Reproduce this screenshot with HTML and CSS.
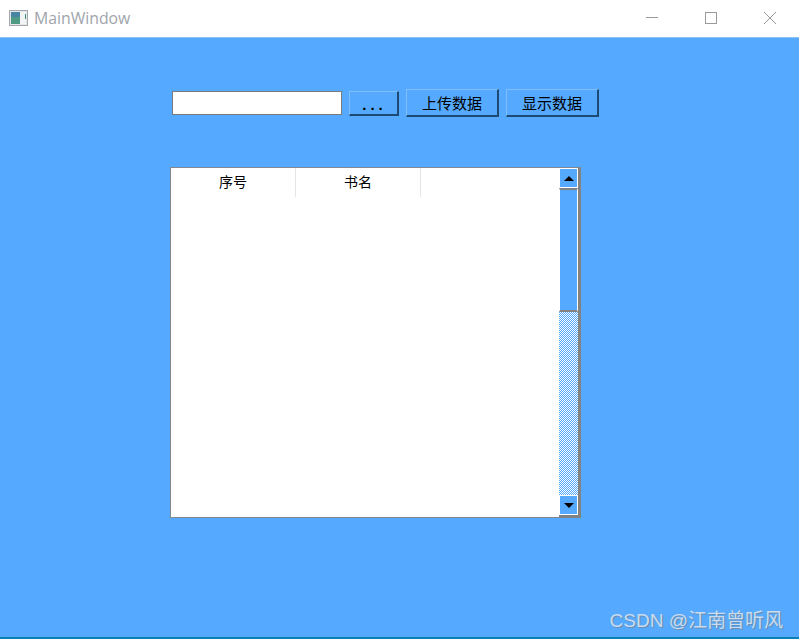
FILE: index.html
```html
<!DOCTYPE html>
<html lang="en">
<head>
    <meta charset="UTF-8">
    <meta name="viewport" content="width=device-width, initial-scale=1.0">
    <title>MainWindow</title>
    <link rel="stylesheet" href="styles.css">
</head>
<body>
    <div class="titlebar">
        <svg class="app-icon" width="19" height="16" viewBox="0 0 19 16">
            <rect x="0.5" y="0.5" width="18" height="15" fill="#e4e6e8" stroke="#a4a8ae"/>
            <rect x="2" y="2" width="9" height="12" fill="#4f9a84"/>
            <rect x="2" y="2" width="9" height="5" fill="#4a84a4"/>
            <rect x="11" y="2" width="6" height="12" fill="#f2f3f3"/>
            <rect x="16" y="4" width="1" height="5" fill="#3f8f7c"/>
        </svg>
        <span class="title">MainWindow</span>
        <div class="window-controls">
            <svg class="ctl" width="12" height="12" viewBox="0 0 12 12"><path d="M0 5.5H12" stroke="#9a9a9a" fill="none"/></svg>
            <svg class="ctl" width="12" height="12" viewBox="0 0 12 12"><rect x="0.5" y="0.5" width="11" height="11" stroke="#9a9a9a" fill="none"/></svg>
            <svg class="ctl" width="12" height="12" viewBox="0 0 12 12"><path d="M0 0L12 12M12 0L0 12" stroke="#9a9a9a" fill="none"/></svg>
        </div>
    </div>

    <div class="content">
        <div class="toolbar">
            <input type="text" class="path-input">
            <button class="btn btn-small">...</button>
            <button class="btn">上传数据</button>
            <button class="btn">显示数据</button>
        </div>

        <div class="table">
            <div class="table-main">
                <div class="table-head">
                    <div class="head-cell">序号</div>
                    <div class="head-cell">书名</div>
                </div>
            </div>
            <div class="scrollbar">
                <div class="scroll-btn"><span class="arrow-up"></span></div>
                <div class="scroll-thumb"></div>
                <div class="scroll-track"></div>
                <div class="scroll-btn"><span class="arrow-down"></span></div>
            </div>
        </div>
    </div>

    <div class="watermark">CSDN @江南曾听风</div>
</body>
</html>
```
FILE: styles.css
```css
html, body {
    height: 100%;
}
body {
    margin: 0;
    padding: 0;
    height: 639px;
    overflow: hidden;
    background: #55aaff;
    border-bottom: 2px solid #0a80b4;
    box-sizing: border-box;
    position: relative;
    font-family: "Liberation Sans", "Noto Sans CJK SC", sans-serif;
    font-size: 14px;
    color: black;
}
.titlebar {
    height: 37px;
    background: white;
    display: flex;
    align-items: center;
    padding-left: 9px;
    border-bottom: 1px solid #8fc4f5;
    box-sizing: content-box;
}
.app-icon {
    margin-right: 6px;
    margin-top: -2px;
}
.title {
    font-family: "Open Sans", "Noto Sans", sans-serif;
    font-size: 15.8px;
    color: #a0a4ac;
    margin-top: -1px;
}
.window-controls {
    margin-left: auto;
    display: flex;
    gap: 47px;
    padding-right: 23px;
    margin-top: -2px;
}
.ctl {
    display: block;
}

.content {
    padding: 51px 0 0 170px;
}
.toolbar {
    display: flex;
    align-items: center;
    height: 28px;
    padding-left: 2px;
}
.path-input {
    width: 170px;
    height: 24px;
    box-sizing: border-box;
    border: 1px solid #7a7a7a;
    background: white;
    margin: 0;
    padding: 0;
    outline: none;
}
.btn {
    width: 93px;
    height: 28px;
    box-sizing: border-box;
    margin: 0 0 0 7px;
    padding: 0;
    background: #55aaff;
    border: 1px solid;
    border-color: #7fbfff #1d4a75 #1d4a75 #7fbfff;
    border-right-width: 2px;
    border-bottom-width: 2px;
    font-family: "Noto Sans CJK SC", sans-serif;
    font-size: 15px;
    color: black;
}
.btn-small {
    width: 50px;
    height: 25px;
    font-family: "Liberation Sans", sans-serif;
    font-weight: bold;
    letter-spacing: 4px;
    padding: 3px 0 0 2px;
}

.table {
    margin-top: 50px;
    width: 411px;
    height: 351px;
    box-sizing: border-box;
    border: 1px solid #828790;
    background: white;
    display: flex;
}
.table-main {
    flex: 1;
}
.table-head {
    display: flex;
    height: 29px;
}
.head-cell {
    width: 125px;
    box-sizing: border-box;
    border-right: 1px solid #e5e5e5;
    text-align: center;
    line-height: 27px;
    font-family: "Noto Sans CJK SC", sans-serif;
    font-size: 14px;
}
.scrollbar {
    width: 22px;
    margin-right: -1px;
    margin-bottom: -1px;
    display: flex;
    flex-direction: column;
    border-right: 3px solid #828282;
    border-bottom: 3px solid #828282;
    box-sizing: border-box;
}
.scroll-btn {
    height: 20px;
    flex: none;
    background: #55aaff;
    border: 1px solid white;
    box-sizing: border-box;
    display: flex;
    align-items: center;
    justify-content: center;
}
.arrow-up, .arrow-down {
    width: 0;
    height: 0;
    border-left: 5px solid transparent;
    border-right: 5px solid transparent;
}
.arrow-up {
    border-bottom: 5px solid black;
}
.arrow-down {
    border-top: 5px solid black;
}
.scroll-thumb {
    height: 124px;
    flex: none;
    background: #55aaff;
    border: 1px solid white;
    border-top: 2px solid #828282;
    border-bottom: 2px solid #828282;
    box-sizing: border-box;
}
.scroll-track {
    flex: 1;
    background: conic-gradient(white 25%, #55aaff 0 50%, white 0 75%, #55aaff 0) 0 0 / 2px 2px;
}

.watermark {
    position: absolute;
    right: 16px;
    bottom: 5px;
    font-family: "Liberation Sans", "Noto Sans CJK SC", sans-serif;
    font-size: 19px;
    color: #c9dcf0;
    text-shadow: 1px 1px 1px #6d8aa8;
}
```
